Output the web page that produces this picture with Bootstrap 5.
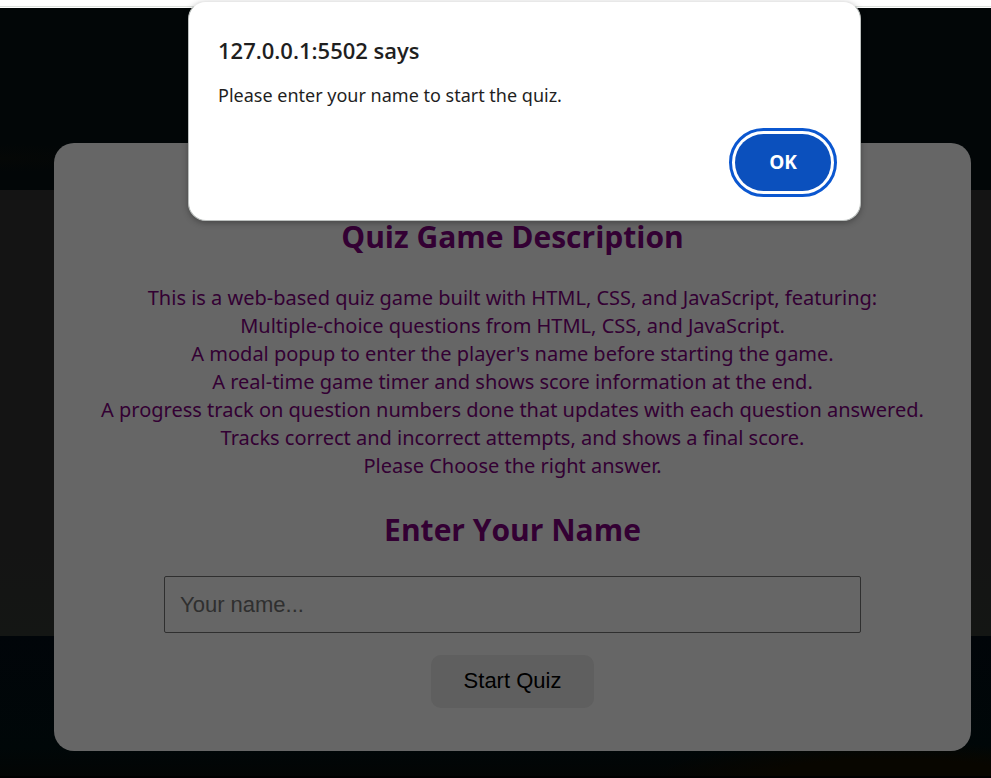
<!DOCTYPE html>
<html lang="en">
<head>
<meta charset="utf-8">
<meta name="viewport" content="width=device-width, initial-scale=1">
<title>Quiz Game</title>
<link href="https://cdn.jsdelivr.net/npm/bootstrap@5.3.0/dist/css/bootstrap.min.css" rel="stylesheet">
<style>
body { font-family: "Segoe UI", "Open Sans", "Noto Sans", sans-serif; background: #000; }
.browser-edge { height: 8px; background: #fff; border-bottom: 1px solid #fff; box-shadow: inset 0 -1px #dfe3df; }
.stage {
  padding: 135px 20px 25px 54px;
  border-bottom: 2px solid #000;
  background:
    radial-gradient(ellipse 240px 34px at 90% 100%, #080600 50%, transparent),
    radial-gradient(ellipse 130px 14px at 0 150px, #050706, transparent),
    linear-gradient(#020607 182px, #141414 182px, #141414 540px, #141614 628px, #010509 628px, #000708 740px, #030504);
}
.quiz-panel { background: #666; border-radius: 20px; padding: 72px 16px 43px; color: #330033; }
.panel-title { font-size: 30px; line-height: 43px; font-weight: 700; color: #330033; }
.intro, .alert-text { font-family: "Segoe UI", "Noto Sans", sans-serif; }
.intro { font-size: 20px; line-height: 28px; margin: 26px 0 28px; }
.name-label { margin-bottom: 25px; }
.name-box {
  width: 697px; max-width: 100%; height: 57px; padding: 0 15px; background: #666; border: 1px solid #2f2f2f; border-radius: 2px;
  font-family: "Liberation Sans", Arial, sans-serif; font-size: 22px; color: #000;
}
.name-box::placeholder { color: #2f2f2f; opacity: 1; }
.start-button {
  width: 163px; height: 53px; background: #5f5f5f; border: 0; border-radius: 10px; color: #000;
  font-family: "Liberation Sans", Arial, sans-serif; font-size: 22px; padding: 0 0 3px; margin-top: 22px;
}
.alert-box {
  top: 1px; left: 188px; right: 130px; z-index: 10; background: #fff; color: #1f1f1f;
  border: 1px solid #bcc0be; border-top-color: #e8e8e8; border-radius: 18px; padding: 33px 29px 29px 29px;
  box-shadow: 0 2px 6px rgba(0, 0, 0, .3);
}
.alert-origin { font-size: 22px; line-height: 30px; font-weight: 600; }
.alert-text { font-size: 18px; line-height: 28px; margin-bottom: 25px; }
.ok-button {
  width: 96px; height: 57px; padding: 0; border: 0; border-radius: 29px; background: #0b50bd; color: #fff;
  font-size: 19px; font-weight: 700; outline: 3px solid #0b57d0; outline-offset: 3px;
}
</style>
</head>
<body>
<div class="browser-edge"></div>
<main class="stage">
  <section class="quiz-panel text-center">
    <h2 class="panel-title mb-0">Quiz Game Description</h2>
    <p class="intro">
      This is a web-based quiz game built with HTML, CSS, and JavaScript, featuring:<br>
      Multiple-choice questions from HTML, CSS, and JavaScript.<br>
      A modal popup to enter the player's name before starting the game.<br>
      A real-time game timer and shows score information at the end.<br>
      A progress track on question numbers done that updates with each question answered.<br>
      Tracks correct and incorrect attempts, and shows a final score.<br>
      Please Choose the right answer.
    </p>
    <form class="d-flex flex-column align-items-center">
      <label class="panel-title name-label" for="player">Enter Your Name</label>
      <input class="name-box" id="player" type="text" placeholder="Your name...">
      <button class="start-button" type="button">Start Quiz</button>
    </form>
  </section>
</main>
<div class="alert-box position-absolute" role="alertdialog" aria-labelledby="origin" aria-describedby="message">
  <div class="alert-origin mb-3" id="origin">127.0.0.1:5502 says</div>
  <div class="alert-text" id="message">Please enter your name to start the quiz.</div>
  <div class="d-flex justify-content-end"><button class="ok-button" type="button">OK</button></div>
</div>
<script src="https://cdn.jsdelivr.net/npm/bootstrap@5.3.0/dist/js/bootstrap.bundle.min.js"></script>
</body>
</html>
